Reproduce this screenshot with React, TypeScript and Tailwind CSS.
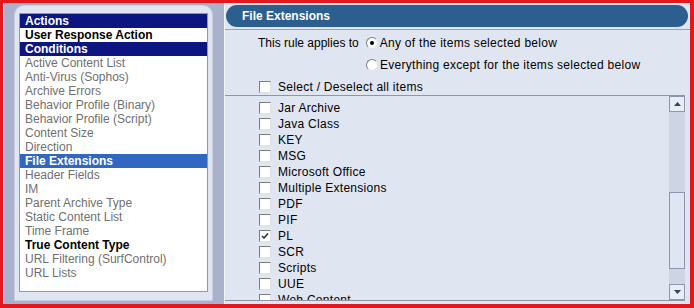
import React from 'react';

const font = { fontFamily: '"Liberation Sans", Arial, sans-serif' };

type LeftItem = { label: string; kind: 'head' | 'bold' | 'item' | 'selected' };

const leftItems: LeftItem[] = [
  { label: 'Actions', kind: 'head' },
  { label: 'User Response Action', kind: 'bold' },
  { label: 'Conditions', kind: 'head' },
  { label: 'Active Content List', kind: 'item' },
  { label: 'Anti-Virus (Sophos)', kind: 'item' },
  { label: 'Archive Errors', kind: 'item' },
  { label: 'Behavior Profile (Binary)', kind: 'item' },
  { label: 'Behavior Profile (Script)', kind: 'item' },
  { label: 'Content Size', kind: 'item' },
  { label: 'Direction', kind: 'item' },
  { label: 'File Extensions', kind: 'selected' },
  { label: 'Header Fields', kind: 'item' },
  { label: 'IM', kind: 'item' },
  { label: 'Parent Archive Type', kind: 'item' },
  { label: 'Static Content List', kind: 'item' },
  { label: 'Time Frame', kind: 'item' },
  { label: 'True Content Type', kind: 'bold' },
  { label: 'URL Filtering (SurfControl)', kind: 'item' },
  { label: 'URL Lists', kind: 'item' },
];

const extensions = [
  { label: 'Jar Archive', checked: false },
  { label: 'Java Class', checked: false },
  { label: 'KEY', checked: false },
  { label: 'MSG', checked: false },
  { label: 'Microsoft Office', checked: false },
  { label: 'Multiple Extensions', checked: false },
  { label: 'PDF', checked: false },
  { label: 'PIF', checked: false },
  { label: 'PL', checked: true },
  { label: 'SCR', checked: false },
  { label: 'Scripts', checked: false },
  { label: 'UUE', checked: false },
  { label: 'Web Content', checked: false },
];

const Checkbox = ({ checked }: { checked?: boolean }) => (
  <span className="relative flex h-[12px] w-[12px] shrink-0 items-center justify-center border border-t-[#7d7d7d] border-l-[#7d7d7d] border-r-[#e0e0e0] border-b-[#e0e0e0] bg-white">
    {checked && (
      <svg width="8" height="8" viewBox="0 0 8 8">
        <path d="M1 4 L3 6 L7 1.5" fill="none" stroke="#222" strokeWidth="1.4" />
      </svg>
    )}
  </span>
);

const Radio = ({ checked }: { checked?: boolean }) => (
  <span className="flex h-[12px] w-[12px] shrink-0 items-center justify-center rounded-full border border-t-[#7d7d7d] border-l-[#7d7d7d] border-r-[#e2e2e2] border-b-[#e2e2e2] bg-white">
    {checked && <span className="h-[4px] w-[4px] rounded-full bg-black" />}
  </span>
);

const ScrollButton = ({ up }: { up?: boolean }) => (
  <div className="flex h-[16px] w-[16px] items-center justify-center border border-[#8c96ac] bg-[#e8edf6]">
    <svg width="7" height="4" viewBox="0 0 7 4">
      <path d={up ? 'M0 4 L3.5 0 L7 4 Z' : 'M0 0 L3.5 4 L7 0 Z'} fill="#2f4468" />
    </svg>
  </div>
);

export default function App() {
  return (
    <div className="h-[308px] w-[694px] bg-[#e3171c] pb-[4px] pl-[3px] pr-[4px] pt-[3px]" style={font}>
      <div className="flex h-full border-l border-[#f0f0f0] bg-[#a9b1cd]">
        {/* left panel */}
        <div className="ml-[10px] mt-[2px] h-[296px] w-[199px] rounded-t-[10px] border border-[#c8cfe0] bg-[#dfe5f1] pl-[4px] pt-[7px]">
          <div className="h-[279px] w-[189px] border border-[#8f98ad] bg-white">
            {leftItems.map((it) => {
              const cls =
                it.kind === 'head'
                  ? 'bg-[#0c1580] text-white font-bold'
                  : it.kind === 'selected'
                  ? 'bg-[#3267c1] text-white font-bold'
                  : it.kind === 'bold'
                  ? 'text-black font-bold'
                  : 'text-[#707070]';
              return (
                <div key={it.label} className={`h-[14px] pl-[5px] text-[12px] leading-[14px] whitespace-nowrap ${cls}`}>
                  {it.label}
                </div>
              );
            })}
          </div>
        </div>

        {/* right panel */}
        <div className="ml-[11px] flex h-[301px] w-[466px] flex-col border-l border-[#f2f4f8] bg-[#e0e6f1] pt-[2px] tracking-[0.28px]">
          <div className="ml-[1px] flex h-[22px] w-[462px] items-center rounded-full bg-[#2c5e90] pl-[16px] text-[12px] font-bold tracking-normal text-white">
            File Extensions
          </div>
          <div className="mt-[2px] border-t border-[#9aa1b0]" />
          <div className="flex h-[22px] items-center pl-[33px] pt-[3px] text-[12px] text-black">
            <span className="tracking-normal">This rule applies to</span>
            <span className="ml-[7px]"><Radio checked /></span>
            <span className="ml-[2px]">Any of the items selected below</span>
          </div>
          <div className="flex h-[26px] items-center pl-[141px] text-[12px] text-black">
            <Radio />
            <span className="ml-[2px]">Everything except for the items selected below</span>
          </div>
          <div className="flex h-[17px] items-center pl-[34px] text-[12px] text-black">
            <Checkbox />
            <span className="ml-[7px]">Select / Deselect all items</span>
          </div>
          <div className="flex h-[206px] w-[460px] border-t border-b border-[#8f96a6]">
            <div className="flex-1 overflow-hidden pt-[4px]">
              {extensions.map((e) => (
                <div key={e.label} className="flex h-[16px] items-center pl-[34px] text-[12px] text-black">
                  <Checkbox checked={e.checked} />
                  <span className="ml-[7px] whitespace-nowrap">{e.label}</span>
                </div>
              ))}
            </div>
            <div className="flex w-[16px] flex-col bg-[#cdd4e3]">
              <ScrollButton up />
              <div className="flex-1 pt-[80px]">
                <div className="h-[77px] w-[16px] border border-[#8c96ac] bg-[#dfe5f2]" />
              </div>
              <ScrollButton />
            </div>
          </div>
        </div>
      </div>
    </div>
  );
}
